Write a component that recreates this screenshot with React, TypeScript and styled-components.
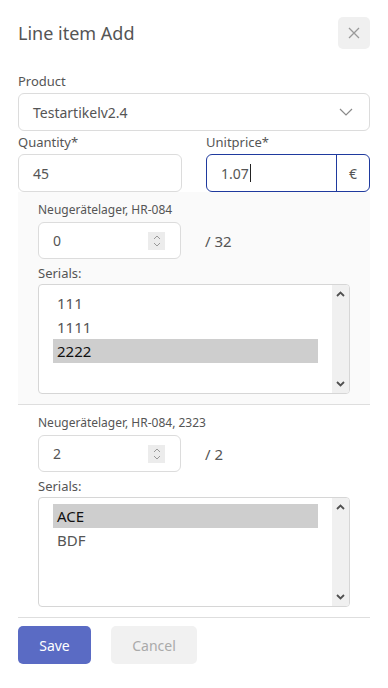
import styled, { createGlobalStyle } from 'styled-components';

const GlobalStyle = createGlobalStyle`
  body {
    margin: 0;
    background: #fff;
    font-family: "Noto Sans", "Open Sans", Arial, sans-serif;
    color: #555;
  }
`;

const stock = [
  { location: 'Neugerätelager, HR-084', qty: '0', max: '32', serials: ['111', '1111', '2222'], selected: '2222', shaded: true },
  { location: 'Neugerätelager, HR-084, 2323', qty: '2', max: '2', serials: ['ACE', 'BDF'], selected: 'ACE', shaded: false },
];

export default function App() {
  return (
    <Page>
      <GlobalStyle />
      <Header>
        <Title>Line item Add</Title>
        <CloseButton>
          <svg width="12" height="12" viewBox="0 0 12 12">
            <path d="M1 1L11 11M11 1L1 11" stroke="#9a9a9a" strokeWidth="1.3" />
          </svg>
        </CloseButton>
      </Header>

      <Field>
        <Label>Product</Label>
        <SelectBox>
          <span>Testartikelv2.4</span>
          <svg width="14" height="8" viewBox="0 0 14 8">
            <path d="M1 1L7 7L13 1" fill="none" stroke="#8a8a8a" strokeWidth="1.2" />
          </svg>
        </SelectBox>
      </Field>

      <TwoCols>
        <Field>
          <Label>Quantity*</Label>
          <TextBox>45</TextBox>
        </Field>
        <Field>
          <Label>Unitprice*</Label>
          <PriceBox>
            <PriceValue>
              1.07
              <Caret />
            </PriceValue>
            <Addon>€</Addon>
          </PriceBox>
        </Field>
      </TwoCols>

      {stock.map((s) => (
        <StockSection key={s.location} $shaded={s.shaded}>
          <SmallLabel>{s.location}</SmallLabel>
          <QtyRow>
            <NumberBox>
              <span>{s.qty}</span>
              <Spinner>
                <svg width="10" height="14" viewBox="0 0 10 14">
                  <path d="M2 5L5 2L8 5M2 9L5 12L8 9" fill="none" stroke="#999" strokeWidth="1" />
                </svg>
              </Spinner>
            </NumberBox>
            <MaxText>/ {s.max}</MaxText>
          </QtyRow>
          <SerialLabel>Serials:</SerialLabel>
          <ListBox>
            <Items>
              {s.serials.map((serial) => (
                <Item key={serial} $selected={serial === s.selected}>
                  {serial}
                </Item>
              ))}
            </Items>
            <Scrollbar>
              <svg width="9" height="6" viewBox="0 0 9 6">
                <path d="M1 5L4.5 1.5L8 5" fill="none" stroke="#505050" strokeWidth="1.8" />
              </svg>
              <svg width="9" height="6" viewBox="0 0 9 6">
                <path d="M1 1L4.5 4.5L8 1" fill="none" stroke="#505050" strokeWidth="1.8" />
              </svg>
            </Scrollbar>
          </ListBox>
        </StockSection>
      ))}

      <Actions>
        <SaveButton>Save</SaveButton>
        <CancelButton>Cancel</CancelButton>
      </Actions>
    </Page>
  );
}

const Page = styled.div`
  width: 352px;
  padding: 17px 18px 0;
`;

const Header = styled.div`
  display: flex;
  align-items: center;
  justify-content: space-between;
  height: 32px;
  margin-bottom: 24px;
`;

const Title = styled.h1`
  margin: 0;
  font-size: 18px;
  font-weight: 400;
  color: #555;
`;

const CloseButton = styled.div`
  width: 32px;
  height: 32px;
  border-radius: 5px;
  background: #f0f0f0;
  display: flex;
  align-items: center;
  justify-content: center;
`;

const Field = styled.div`
  display: flex;
  flex-direction: column;
  gap: 4px;
`;

const Label = styled.div`
  font-size: 13px;
  line-height: 16px;
  color: #555;
`;

const SelectBox = styled.div`
  height: 36px;
  border: 1px solid #dcdcdc;
  border-radius: 6px;
  display: flex;
  align-items: center;
  justify-content: space-between;
  padding: 0 16px 0 14px;
  font-size: 14px;
  color: #555;
  margin-bottom: 3px;
`;

const TwoCols = styled.div`
  display: grid;
  grid-template-columns: 1fr 1fr;
  column-gap: 24px;
`;

const TextBox = styled.div`
  height: 36px;
  border: 1px solid #dcdcdc;
  border-radius: 6px;
  display: flex;
  align-items: center;
  padding: 0 14px;
  font-size: 14px;
  color: #555;
`;

const PriceBox = styled.div`
  height: 36px;
  border: 1px solid #1f3a9e;
  border-radius: 6px;
  display: flex;
  font-size: 14px;
  color: #555;
  background: #fff;
  position: relative;
  z-index: 1;
`;

const PriceValue = styled.div`
  flex: 1;
  display: flex;
  align-items: center;
  padding: 0 14px;
`;

const Caret = styled.span`
  width: 1px;
  height: 18px;
  background: #222;
  margin-left: 1px;
`;

const Addon = styled.div`
  width: 32px;
  border-left: 1px solid #1f3a9e;
  display: flex;
  align-items: center;
  justify-content: center;
`;

const StockSection = styled.div<{ $shaded: boolean }>`
  background: ${(p) => (p.$shaded ? '#fafafa' : '#fff')};
  border-bottom: 1px solid #dedede;
  padding: 10px 20px 10px;
  display: flex;
  flex-direction: column;
`;

const SmallLabel = styled.div`
  font-size: 12px;
  line-height: 16px;
  color: #555;
  margin-bottom: 4px;
`;

const QtyRow = styled.div`
  display: flex;
  align-items: center;
  gap: 24px;
  margin-bottom: 6px;
`;

const NumberBox = styled.div`
  width: 143px;
  height: 37px;
  box-sizing: border-box;
  border: 1px solid #dcdcdc;
  border-radius: 6px;
  background: #fff;
  display: flex;
  align-items: center;
  justify-content: space-between;
  padding: 0 15px 0 14px;
  font-size: 14px;
  color: #555;
`;

const Spinner = styled.div`
  width: 17px;
  height: 18px;
  background: #ececec;
  display: flex;
  align-items: center;
  justify-content: center;
`;

const MaxText = styled.div`
  font-size: 15px;
  color: #555;
`;

const SerialLabel = styled.div`
  font-size: 13px;
  line-height: 16px;
  color: #555;
  margin-bottom: 3px;
`;

const ListBox = styled.div`
  height: 110px;
  box-sizing: border-box;
  border: 1px solid #d6d6d6;
  border-radius: 4px;
  background: #fff;
  display: flex;
  overflow: hidden;
`;

const Items = styled.div`
  flex: 1;
  padding: 6px 14px 0;
  display: flex;
  flex-direction: column;
`;

const Item = styled.div<{ $selected: boolean }>`
  height: 24px;
  line-height: 24px;
  padding-left: 4px;
  font-size: 15px;
  color: ${(p) => (p.$selected ? '#111' : '#555')};
  background: ${(p) => (p.$selected ? '#cecece' : 'transparent')};
`;

const Scrollbar = styled.div`
  width: 17px;
  background: #f0f0f0;
  display: flex;
  flex-direction: column;
  align-items: center;
  justify-content: space-between;
  padding: 6px 0 6px;
`;

const Actions = styled.div`
  display: flex;
  gap: 20px;
  padding-top: 8px;
`;

const SaveButton = styled.button`
  width: 73px;
  height: 38px;
  border: none;
  border-radius: 5px;
  background: #5a6bc4;
  color: #fff;
  font-family: inherit;
  font-size: 14px;
`;

const CancelButton = styled.button`
  width: 86px;
  height: 38px;
  border: none;
  border-radius: 5px;
  background: #f1f1f1;
  color: #aaa;
  font-family: inherit;
  font-size: 14px;
`;
